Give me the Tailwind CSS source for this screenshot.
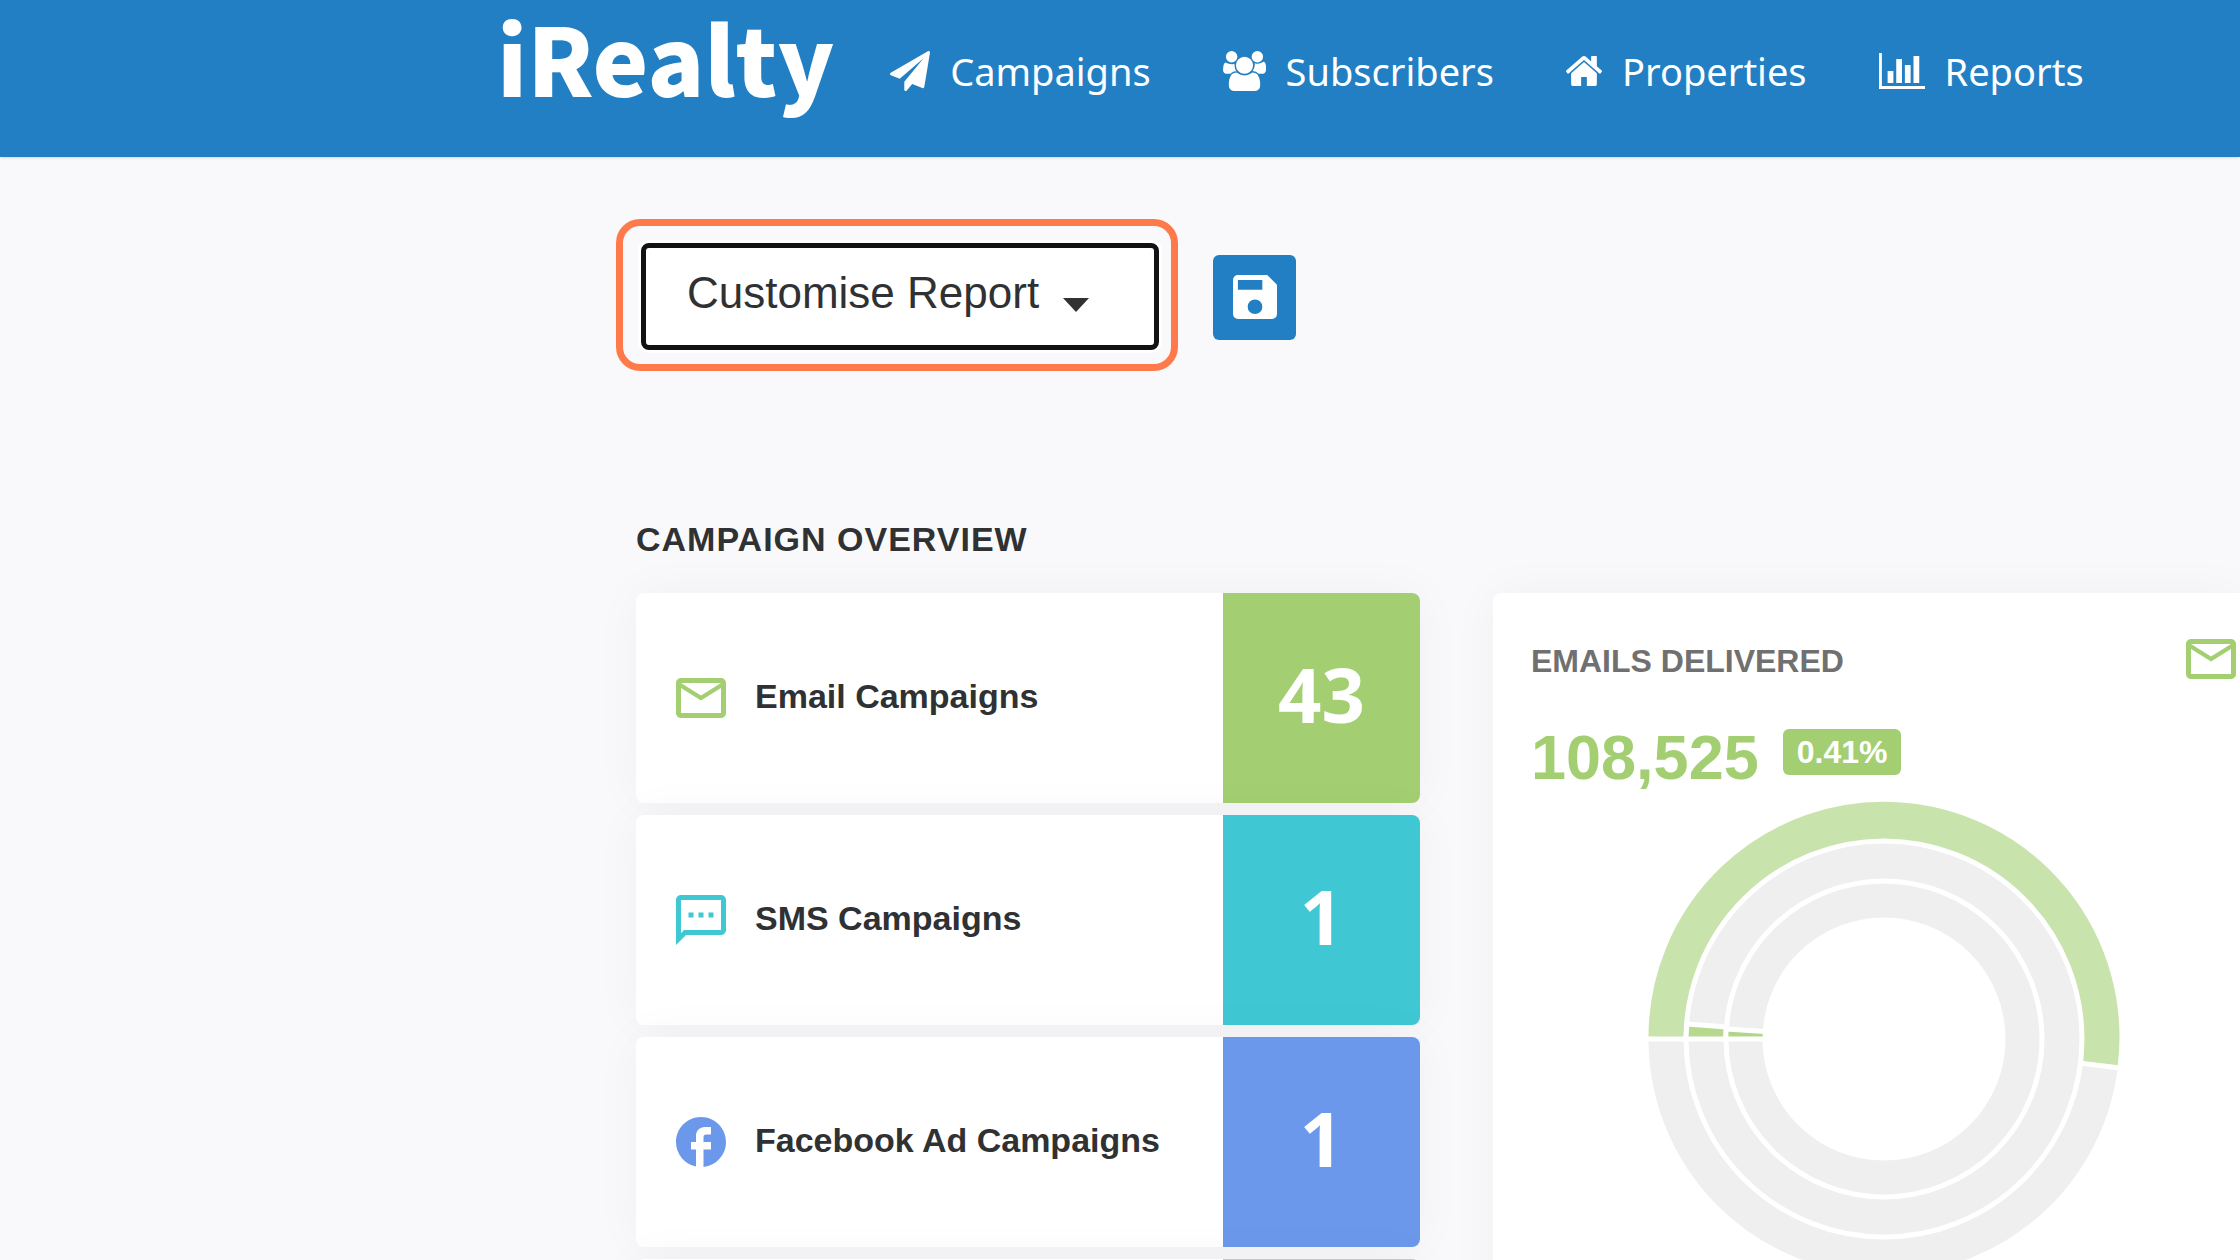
<!DOCTYPE html>
<html lang="en">
<head>
<meta charset="utf-8">
<meta name="viewport" content="width=device-width, initial-scale=1">
<title>iRealty Reports</title>
<script src="https://cdn.jsdelivr.net/npm/@tailwindcss/browser@4"></script>
</head>
<body class="h-screen overflow-hidden bg-[#f9f9fc] font-['Liberation_Sans',sans-serif] text-[#2f3133]">
<header class="flex h-[157px] items-start bg-[#227fc3] pl-[497px] text-white shadow-sm">
  <a href="#" class="font-['Noto_Sans_CJK_SC',sans-serif] text-[94px] leading-[112px] font-black">iRealty</a>
  <nav class="ml-14 flex items-center gap-[72px] pt-[46px] font-['Noto_Sans',sans-serif] text-[38px] leading-[50px] whitespace-nowrap">
    <a href="#" class="flex items-center gap-5">
      <svg class="size-10" viewBox="0 0 1792 1792" fill="currentColor" aria-hidden="true"><path d="M1764 11q33 24 27 64l-256 1536q-5 29-32 45-14 8-31 8-11 0-24-5l-453-185-242 295q-18 23-49 23-13 0-22-4-19-7-30.500-23.500t-11.500-36.500v-349l864-1059-1069 925-395-162q-37-14-40-55-2-40 32-59l1664-960q15-9 32-9 20 0 36 11z"/></svg>
      Campaigns</a>
    <a href="#" class="flex items-center gap-5">
      <svg class="h-10 w-[43px]" viewBox="-64 0 1920 1792" fill="currentColor" aria-hidden="true"><path d="M529 896q-162 5-265 128h-134q-82 0-138-40.500t-56-118.500q0-353 124-353 6 0 43.500 21t97.500 42.500 119 21.500q67 0 133-23-5 37-5 66 0 159 93 284zm1071 637q0 120-73 189.500t-194 69.500h-874q-121 0-194-69.500t-73-189.500q0-53 3.500-103.500t14-109 26.500-108.500 43-97.500 62-81 85.500-53.500 111.500-20q10 0 43 21.500t73 48 107 48 135 21.500 135-21.500 107-48 73-48 43-21.500q61 0 111.500 20t85.500 53.500 62 81 43 97.500 26.500 108.500 14 109 3.500 103.500zm-1024-1277q0 106-75 181t-181 75-181-75-75-181 75-181 181-75 181 75 75 181zm704 384q0 159-112.500 271.500t-271.500 112.500-271.500-112.500-112.500-271.500 112.500-271.500 271.500-112.500 271.500 112.500 112.500 271.500zm576 225q0 78-56 118.500t-138 40.500h-134q-103-123-265-128 93-125 93-284 0-29-5-66 66 23 133 23 59 0 119-21.500t97.500-42.500 43.500-21q124 0 124 353zm-128-609q0 106-75 181t-181 75-181-75-75-181 75-181 181-75 181 75 75 181z"/></svg>
      Subscribers</a>
    <a href="#" class="flex items-center gap-5">
      <svg class="h-[30px] w-9" viewBox="89 253 1614 1283" preserveAspectRatio="none" fill="currentColor" aria-hidden="true"><path d="M1472 992v480q0 26-19 45t-45 19h-384v-384h-256v384h-384q-26 0-45-19t-19-45v-480q0-1 .5-3t.5-3l575-474 575 474q1 2 1 6zm223-69l-62 74q-8 9-21 11h-3q-13 0-21-7l-692-577-692 577q-12 8-24 7-13-2-21-11l-62-74q-8-10-7-23.500t11-21.500l719-599q32-26 76-26t76 26l244 204v-195q0-14 9-23t23-9h192q14 0 23 9t9 23v408l219 182q10 8 11 21.500t-7 23.500z"/></svg>
      Properties</a>
    <a href="#" class="flex items-center gap-5">
      <svg class="h-9 w-[46px]" viewBox="0 128 2048 1536" preserveAspectRatio="none" fill="currentColor" aria-hidden="true"><path d="M640 896v512h-256v-512h256zm384-512v1024h-256v-1024h256zm1024 1152v128h-2048v-1536h128v1408h1920zm-640-896v768h-256v-768h256zm384-384v1152h-256v-1152h256z"/></svg>
      Reports</a>
  </nav>
</header>
<main class="pl-[636px]">
  <div class="-ml-5 flex items-center gap-[35px] pt-[62px]">
    <div class="rounded-[24px] border-[7px] border-[#ff7a4b] pt-[17px] pr-3 pb-[14px] pl-[18px]">
      <div class="relative">
        <select aria-label="Customise Report" class="block h-[107px] w-[518px] appearance-none rounded-lg border-[5px] border-[#111313] bg-white pb-2 pl-[41px] text-[44px] shadow-[0_0_0_3px_#fff]">
          <option>Customise Report</option>
        </select>
        <svg class="pointer-events-none absolute top-[55px] right-[70px] h-[14px] w-[26px]" viewBox="0 0 26 14" fill="#2f3133" aria-hidden="true"><path d="M0 0h26L13 14z"/></svg>
      </div>
    </div>
    <button aria-label="Save report" class="mt-1 flex h-[85px] w-[83px] items-center justify-center rounded-md bg-[#227fc3] text-white">
      <svg class="size-11" viewBox="3 3 18 18" fill="currentColor" aria-hidden="true"><path d="M17 3H5a2 2 0 0 0-2 2v14a2 2 0 0 0 2 2h14a2 2 0 0 0 2-2V7l-4-4zm-5 16a3 3 0 1 1 0-6 3 3 0 0 1 0 6zm3-10H5V5h10v4z"/></svg>
    </button>
  </div>
  <h2 class="mt-[148px] text-[34px] leading-10 font-bold tracking-[1px]">CAMPAIGN OVERVIEW</h2>
  <div class="mt-[34px] grid grid-cols-[784px_1fr] items-start gap-[73px]">
    <ul class="flex flex-col gap-3">
      <li class="flex h-[210px] overflow-hidden rounded-lg bg-white shadow-[0_0_50px_rgba(0,0,0,0.04)]">
        <div class="flex flex-1 items-center gap-[29px] pl-10 text-[34px] font-bold">
          <svg class="h-10 w-[50px]" viewBox="2 4 20 16" preserveAspectRatio="none" fill="#a3cf72" aria-hidden="true"><path d="M22 6c0-1.100-.9-2-2-2H4c-1.100 0-2 .9-2 2v12c0 1.100.9 2 2 2h16c1.100 0 2-.9 2-2V6zm-2 0l-8 5-8-5h16zm0 12H4V8l8 5 8-5v10z"/></svg>
          <span class="pb-1">Email Campaigns</span></div>
        <div class="flex w-[197px] items-center justify-center bg-[#a3cf72] pb-2 font-['Open_Sans',sans-serif] text-[76px] font-bold text-white">43</div>
      </li>
      <li class="flex h-[210px] overflow-hidden rounded-lg bg-white shadow-[0_0_50px_rgba(0,0,0,0.04)]">
        <div class="flex flex-1 items-center gap-[29px] pl-10 text-[34px] font-bold">
          <svg class="size-[50px]" viewBox="2 2 20 20" fill="#3fc8d4" aria-hidden="true"><path d="M20 2H4c-1.100 0-2 .9-2 2v18l4-4h14c1.100 0 2-.9 2-2V4c0-1.100-.9-2-2-2zm0 14H5.200L4 17.200V4h16v12zM7 9h2v2H7zm4 0h2v2h-2zm4 0h2v2h-2z"/></svg>
          <span class="pb-1">SMS Campaigns</span></div>
        <div class="flex w-[197px] items-center justify-center bg-[#3fc8d4] pb-2 font-['Open_Sans',sans-serif] text-[76px] font-bold text-white">1</div>
      </li>
      <li class="flex h-[210px] overflow-hidden rounded-lg bg-white shadow-[0_0_50px_rgba(0,0,0,0.04)]">
        <div class="flex flex-1 items-center gap-[29px] pl-10 text-[34px] font-bold">
          <svg class="size-[50px]" viewBox="2 2 20 20" fill="#6c98ec" aria-hidden="true"><path d="M22 12c0-5.520-4.480-10-10-10S2 6.480 2 12c0 4.840 3.440 8.870 8 9.800V15H8v-3h2V9.500C10 7.570 11.570 6 13.500 6H16v3h-2c-.55 0-1 .45-1 1v2h3v3h-3v6.950c5.050-.5 9-4.760 9-9.950z"/></svg>
          <span class="pb-1">Facebook Ad Campaigns</span></div>
        <div class="flex w-[197px] items-center justify-center bg-[#6c98ec] pb-2 font-['Open_Sans',sans-serif] text-[76px] font-bold text-white">1</div>
      </li>
      <li class="flex h-[210px] justify-end overflow-hidden rounded-lg bg-white shadow-[0_0_50px_rgba(0,0,0,0.04)]">
        <div class="w-[197px] bg-[#c4c6c8]"></div>
      </li>
    </ul>
    <section class="h-[876px] rounded-l-lg bg-white pt-[46px] pr-1 pl-[38px] shadow-[0_0_50px_rgba(0,0,0,0.04)]">
      <div class="flex items-start justify-between">
        <h3 class="text-[32px] leading-[44px] font-bold text-[#707070]">EMAILS DELIVERED</h3>
        <svg class="h-10 w-[50px]" viewBox="2 4 20 16" preserveAspectRatio="none" fill="#a3cf72" aria-hidden="true"><path d="M22 6c0-1.100-.9-2-2-2H4c-1.100 0-2 .9-2 2v12c0 1.100.9 2 2 2h16c1.100 0 2-.9 2-2V6zm-2 0l-8 5-8-5h16zm0 12H4V8l8 5 8-5v10z"/></svg>
      </div>
      <div class="mt-[38px] flex items-start gap-6">
        <p class="text-[63px] leading-[72px] font-bold text-[#a3cf72]">108,525</p>
        <span class="mt-2 rounded-md bg-[#a3cf72] px-[14px] text-[32px] leading-[46px] font-bold text-white">0.41%</span>
      </div>
      <svg class="mx-auto mt-[6px] size-[480px]" viewBox="-240 -240 480 480" stroke="#fff" stroke-width="5" fill="#efefef" role="img" aria-label="Emails delivered breakdown">
        <circle r="238"/>
        <path fill="#c8e3ac" d="M0 0H-238A238 238 0 1 1 236 29Z"/>
        <circle r="198"/>
        <path fill="#b6d98f" d="M0 0H-198A198 198 0 0 1 -197 -15Z"/>
        <circle r="158"/>
        <path fill="#b0d687" d="M0 0H-158A158 158 0 0 1 -158 -10Z"/>
        <circle r="119" fill="#fff"/>
      </svg>
    </section>
  </div>
</main>
</body>
</html>
